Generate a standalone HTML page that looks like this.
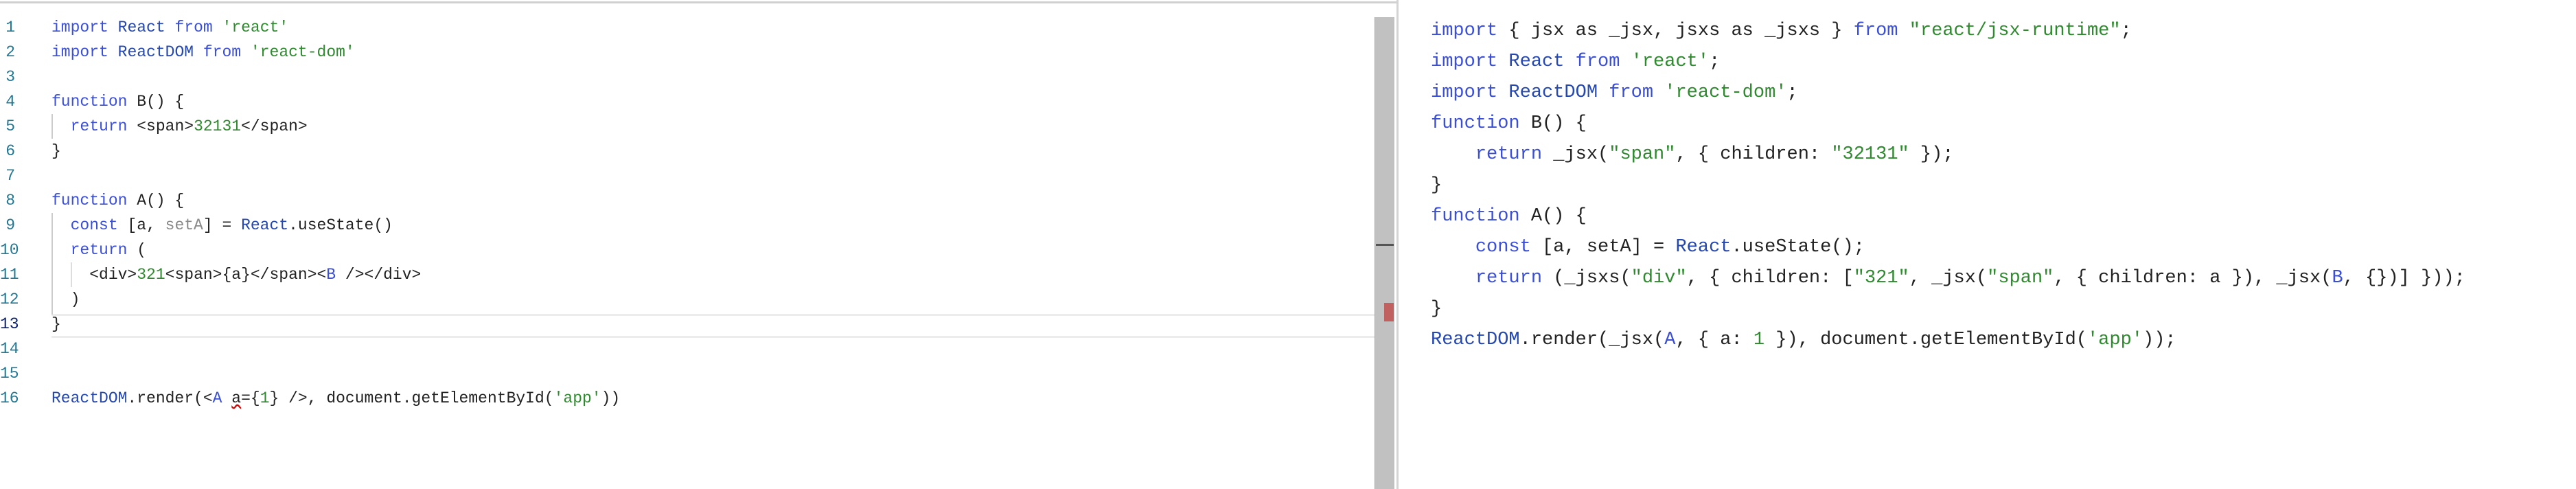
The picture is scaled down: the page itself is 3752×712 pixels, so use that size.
<!DOCTYPE html>
<html><head><meta charset="utf-8"><style>
body{margin:0;width:3752px;height:712px;background:#fff;position:relative;overflow:hidden;font-family:"Liberation Mono","DejaVu Sans Mono",monospace;}
.l{position:absolute;white-space:pre;font-size:23px;line-height:36px;color:#222;}
.n{position:absolute;width:22px;text-align:right;font-size:23px;line-height:36px;color:#237893;font-family:"Liberation Mono",monospace;}
.r{position:absolute;white-space:pre;font-size:27px;line-height:44px;color:#222;left:2084px;}
.k{color:#3a4fd6}.s{color:#2f8a2f}.g{color:#8a8a8a}.d{color:#2447b0}
</style></head><body>
<div style="position:absolute;left:0;top:2px;width:2034px;height:3px;background:#d0d0d0"></div>
<div style="position:absolute;left:2034px;top:0;width:3px;height:712px;background:#d4d4d4"></div>
<div style="position:absolute;left:2002px;top:25px;width:28px;height:687px;background:#c1c1c1;border-left:1px solid #aaa"></div>
<div style="position:absolute;left:2004px;top:355px;width:26px;height:3px;background:#555"></div>
<div style="position:absolute;left:2016px;top:441px;width:14px;height:27px;background:#c0615f"></div>
<div style="position:absolute;left:75px;top:457px;width:1927px;height:29px;border-top:3px solid #ececec;border-bottom:3px solid #ececec"></div>
<div style="position:absolute;left:75px;top:166px;width:2px;height:36px;background:#ccc"></div>
<div style="position:absolute;left:75px;top:310px;width:2px;height:148px;background:#ccc"></div>
<div style="position:absolute;left:103px;top:382px;width:2px;height:36px;background:#ddd"></div>

<div class="n" style="top:22px;left:0">1</div><div class="n" style="top:58px;left:0">2</div><div class="n" style="top:94px;left:0">3</div><div class="n" style="top:130px;left:0">4</div><div class="n" style="top:166px;left:0">5</div><div class="n" style="top:202px;left:0">6</div><div class="n" style="top:238px;left:0">7</div><div class="n" style="top:274px;left:0">8</div><div class="n" style="top:310px;left:0">9</div><div class="n" style="top:346px;left:0">10</div><div class="n" style="top:382px;left:0">11</div><div class="n" style="top:418px;left:0">12</div><div class="n" style="top:454px;left:0;color:#0b216f">13</div><div class="n" style="top:490px;left:0">14</div><div class="n" style="top:526px;left:0">15</div><div class="n" style="top:562px;left:0">16</div>

<div class="l" style="top:22px;left:75px"><span class="k">import</span> <span class="d">React</span> <span class="k">from</span> <span class="s">'react'</span></div>
<div class="l" style="top:58px;left:75px"><span class="k">import</span> <span class="d">ReactDOM</span> <span class="k">from</span> <span class="s">'react-dom'</span></div>
<div class="l" style="top:130px;left:75px"><span class="k">function</span> B() {</div>
<div class="l" style="top:166px;left:75px">  <span class="k">return</span> &lt;span&gt;<span class="s">32131</span>&lt;/span&gt;</div>
<div class="l" style="top:202px;left:75px">}</div>
<div class="l" style="top:274px;left:75px"><span class="k">function</span> A() {</div>
<div class="l" style="top:310px;left:75px">  <span class="k">const</span> [a, <span class="g">setA</span>] = <span class="d">React</span>.useState()</div>
<div class="l" style="top:346px;left:75px">  <span class="k">return</span> (</div>
<div class="l" style="top:382px;left:75px">    &lt;div&gt;<span class="s">321</span>&lt;span&gt;{a}&lt;/span&gt;&lt;<span class="k">B</span> /&gt;&lt;/div&gt;</div>
<div class="l" style="top:418px;left:75px">  )</div>
<div class="l" style="top:454px;left:75px">}</div>
<div class="l" style="top:562px;left:75px"><span class="d">ReactDOM</span>.render(&lt;<span class="k">A</span> <span style="text-decoration:underline wavy #d00">a</span>={<span class="s">1</span>} /&gt;, document.getElementById(<span class="s">'app'</span>))</div>

<div class="r" style="top:23px"><span class="k">import</span> { jsx as _jsx, jsxs as _jsxs } <span class="k">from</span> <span class="s">"react/jsx-runtime"</span>;</div>
<div class="r" style="top:68px"><span class="k">import</span> <span class="d">React</span> <span class="k">from</span> <span class="s">'react'</span>;</div>
<div class="r" style="top:113px"><span class="k">import</span> <span class="d">ReactDOM</span> <span class="k">from</span> <span class="s">'react-dom'</span>;</div>
<div class="r" style="top:158px"><span class="k">function</span> B() {</div>
<div class="r" style="top:203px">    <span class="k">return</span> _jsx(<span class="s">"span"</span>, { children: <span class="s">"32131"</span> });</div>
<div class="r" style="top:248px">}</div>
<div class="r" style="top:293px"><span class="k">function</span> A() {</div>
<div class="r" style="top:338px">    <span class="k">const</span> [a, setA] = <span class="d">React</span>.useState();</div>
<div class="r" style="top:383px">    <span class="k">return</span> (_jsxs(<span class="s">"div"</span>, { children: [<span class="s">"321"</span>, _jsx(<span class="s">"span"</span>, { children: a }), _jsx(<span class="k">B</span>, {})] }));</div>
<div class="r" style="top:428px">}</div>
<div class="r" style="top:473px"><span class="d">ReactDOM</span>.render(_jsx(<span class="k">A</span>, { a: <span class="s">1</span> }), document.getElementById(<span class="s">'app'</span>));</div>
</body></html>
